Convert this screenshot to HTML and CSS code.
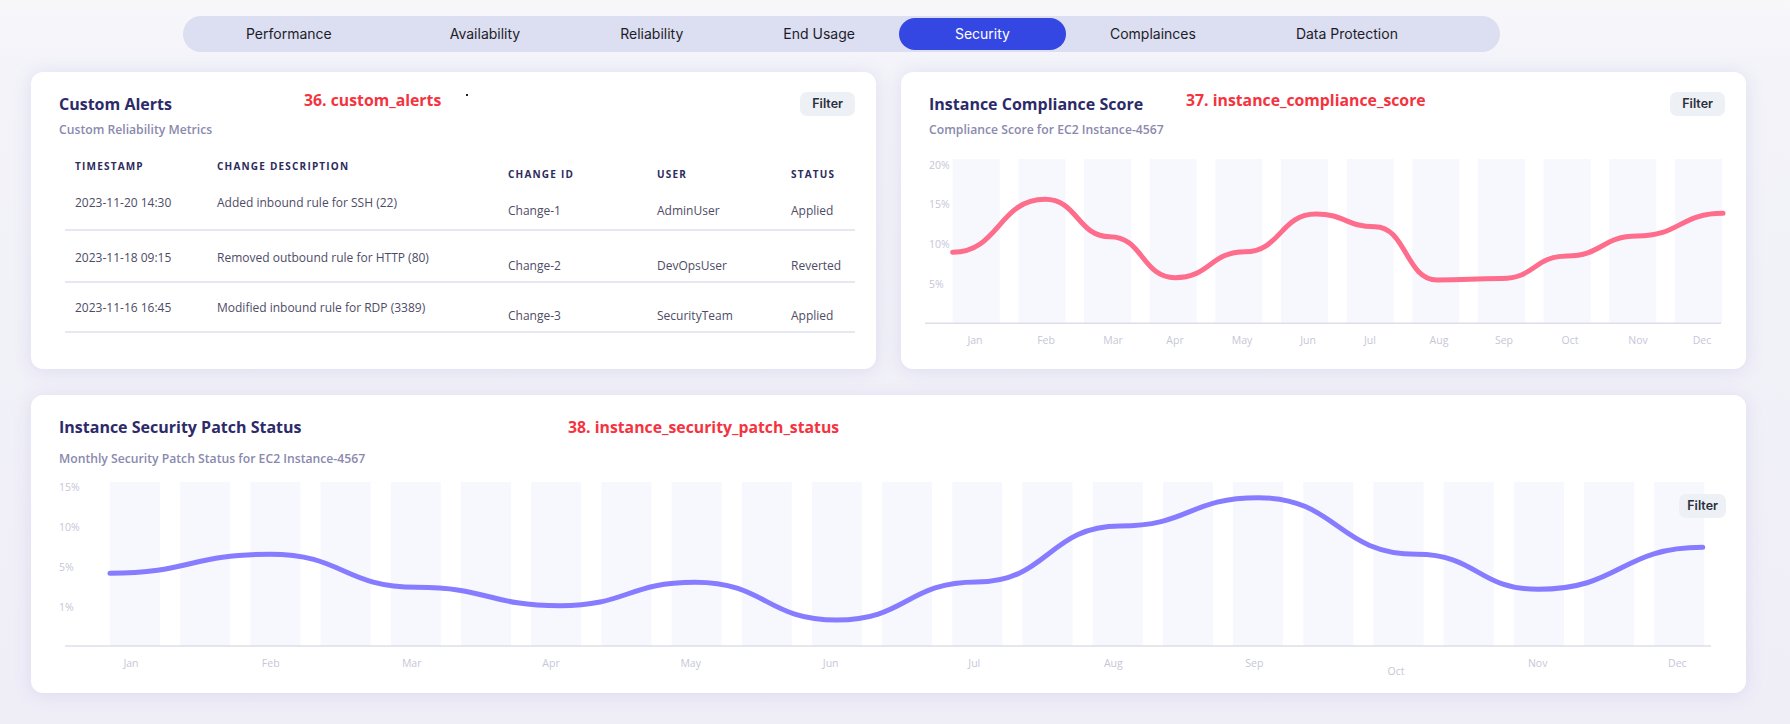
FILE: index.html
```html
<!DOCTYPE html>
<html lang="en">
<head>
<meta charset="utf-8">
<title>Security</title>
<link rel="stylesheet" href="styles.css">
</head>
<body>
<div class="page">
  <nav class="tabs">
    <span class="tab">Performance</span>
    <span class="tab">Availability</span>
    <span class="tab">Reliability</span>
    <span class="tab">End Usage</span>
    <span class="tab active">Security</span>
    <span class="tab">Complainces</span>
    <span class="tab">Data Protection</span>
  </nav>

  <div class="grid">
    <section class="card">
      <div class="card-head">
        <h2 class="card-title">Custom Alerts</h2>
        <button class="filter">Filter</button>
      </div>
      <p class="card-sub">Custom Reliability Metrics</p>
      <span class="tag tag-36">36. custom_alerts</span>
      <span class="dot"></span>
      <div class="table">
        <div class="tr th">
          <div class="c">TIMESTAMP</div>
          <div class="c">CHANGE DESCRIPTION</div>
          <div class="c low">CHANGE ID</div>
          <div class="c low">USER</div>
          <div class="c low">STATUS</div>
        </div>
        <div class="tr td">
          <div class="c">2023-11-20 14:30</div>
          <div class="c">Added inbound rule for SSH (22)</div>
          <div class="c low">Change-1</div>
          <div class="c low">AdminUser</div>
          <div class="c low">Applied</div>
        </div>
        <div class="tr td">
          <div class="c">2023-11-18 09:15</div>
          <div class="c">Removed outbound rule for HTTP (80)</div>
          <div class="c low">Change-2</div>
          <div class="c low">DevOpsUser</div>
          <div class="c low">Reverted</div>
        </div>
        <div class="tr td">
          <div class="c">2023-11-16 16:45</div>
          <div class="c">Modified inbound rule for RDP (3389)</div>
          <div class="c low">Change-3</div>
          <div class="c low">SecurityTeam</div>
          <div class="c low">Applied</div>
        </div>
      </div>
    </section>

    <section class="card">
      <div class="card-head">
        <h2 class="card-title">Instance Compliance Score</h2>
        <button class="filter">Filter</button>
      </div>
      <p class="card-sub">Compliance Score for EC2 Instance-4567</p>
      <span class="tag tag-37">37. instance_compliance_score</span>
      <svg class="chart" width="845" height="210" viewBox="0 0 845 210">
        <g class="bars">
          <rect x="51.7" y="9" width="47" height="164"/>
          <rect x="117.4" y="9" width="47" height="164"/>
          <rect x="183.0" y="9" width="47" height="164"/>
          <rect x="248.7" y="9" width="47" height="164"/>
          <rect x="314.3" y="9" width="47" height="164"/>
          <rect x="380.0" y="9" width="47" height="164"/>
          <rect x="445.7" y="9" width="47" height="164"/>
          <rect x="511.3" y="9" width="47" height="164"/>
          <rect x="577.0" y="9" width="47" height="164"/>
          <rect x="642.6" y="9" width="47" height="164"/>
          <rect x="708.3" y="9" width="47" height="164"/>
          <rect x="773.9" y="9" width="47" height="164"/>
        </g>
        <line class="axis" x1="24" y1="173.3" x2="820" y2="173.3"/>
        <g class="ylab">
          <text x="28" y="15">20%</text>
          <text x="28" y="54.3">15%</text>
          <text x="28" y="94.3">10%</text>
          <text x="28" y="134.3">5%</text>
        </g>
        <g class="xlab">
          <text x="74" y="190">Jan</text>
          <text x="145" y="190">Feb</text>
          <text x="212" y="190">Mar</text>
          <text x="274" y="190">Apr</text>
          <text x="341" y="190">May</text>
          <text x="407" y="190">Jun</text>
          <text x="469" y="190">Jul</text>
          <text x="538" y="190">Aug</text>
          <text x="603" y="190">Sep</text>
          <text x="669" y="190">Oct</text>
          <text x="737" y="190">Nov</text>
          <text x="801" y="190">Dec</text>
        </g>
        <path class="line pink" d="M51.7,102.3 C97.85,102.3 97.85,49.3 144,49.3 C176.5,49.3 176.5,86.7 209,86.7 C241.5,86.7 241.5,127.7 274,127.7 C309,127.7 309,101.7 344,101.7 C379.5,101.7 379.5,64 415,64 C444.5,64 444.5,76.7 474,76.7 C505,76.7 505,130 536,130 C568.5,130 568.5,128.5 601,128.5 C633.5,128.5 633.5,106 666,106 C701,106 701,86 736,86 C779,86 779,63.3 822,63.3"/>
      </svg>
    </section>

    <section class="card card-wide">
      <div class="card-head">
        <h2 class="card-title">Instance Security Patch Status</h2>
      </div>
      <p class="card-sub">Monthly Security Patch Status for EC2 Instance-4567</p>
      <span class="tag tag-38">38. instance_security_patch_status</span>
      <button class="filter filter-float">Filter</button>
      <svg class="chart chart-wide" width="1715" height="210" viewBox="0 0 1715 210">
        <g class="bars">
          <rect x="79" y="9" width="50" height="164"/>
          <rect x="149.2" y="9" width="50" height="164"/>
          <rect x="219.4" y="9" width="50" height="164"/>
          <rect x="289.6" y="9" width="50" height="164"/>
          <rect x="359.8" y="9" width="50" height="164"/>
          <rect x="430" y="9" width="50" height="164"/>
          <rect x="500.2" y="9" width="50" height="164"/>
          <rect x="570.4" y="9" width="50" height="164"/>
          <rect x="640.6" y="9" width="50" height="164"/>
          <rect x="710.8" y="9" width="50" height="164"/>
          <rect x="781" y="9" width="50" height="164"/>
          <rect x="851.1" y="9" width="50" height="164"/>
          <rect x="921.3" y="9" width="50" height="164"/>
          <rect x="991.5" y="9" width="50" height="164"/>
          <rect x="1061.7" y="9" width="50" height="164"/>
          <rect x="1131.9" y="9" width="50" height="164"/>
          <rect x="1202.1" y="9" width="50" height="164"/>
          <rect x="1272.3" y="9" width="50" height="164"/>
          <rect x="1342.5" y="9" width="50" height="164"/>
          <rect x="1412.7" y="9" width="50" height="164"/>
          <rect x="1482.9" y="9" width="50" height="164"/>
          <rect x="1553.1" y="9" width="50" height="164"/>
          <rect x="1623.3" y="9" width="50" height="164"/>
        </g>
        <line class="axis" x1="34" y1="173" x2="1680" y2="173"/>
        <g class="ylab">
          <text x="28" y="14">15%</text>
          <text x="28" y="54">10%</text>
          <text x="28" y="94">5%</text>
          <text x="28" y="134">1%</text>
        </g>
        <g class="xlab">
          <text x="100" y="190">Jan</text>
          <text x="239.7" y="190">Feb</text>
          <text x="380.7" y="190">Mar</text>
          <text x="520" y="190">Apr</text>
          <text x="659.7" y="190">May</text>
          <text x="799.7" y="190">Jun</text>
          <text x="943.3" y="190">Jul</text>
          <text x="1082.3" y="190">Aug</text>
          <text x="1223.3" y="190">Sep</text>
          <text x="1365" y="198">Oct</text>
          <text x="1506.7" y="190">Nov</text>
          <text x="1646.3" y="190">Dec</text>
        </g>
        <path class="line purple" d="M79,100.3 C159,100.3 159,81.3 239,81.3 C312.35,81.3 312.35,114.3 385.7,114.3 C457.35,114.3 457.35,132.7 529,132.7 C596.5,132.7 596.5,109.3 664,109.3 C734.85,109.3 734.85,147 805.7,147 C875.7,147 875.7,109 945.7,109 C1017.35,109 1017.35,53 1089,53 C1158.15,53 1158.15,24.7 1227.3,24.7 C1306.5,24.7 1306.5,81.3 1385.7,81.3 C1446.5,81.3 1446.5,116.3 1507.3,116.3 C1589.5,116.3 1589.5,74.3 1671.7,74.3"/>
      </svg>
    </section>
  </div>
</div>
</body>
</html>
```

FILE: styles.css
```css
* { box-sizing: border-box; }

body {
  margin: 0;
  width: 1790px;
  height: 724px;
  overflow: hidden;
  font-family: "Open Sans", sans-serif;
  background: linear-gradient(180deg, #f8f8fb 0px, #f3f3f9 60px, #efeef7 100%);
}

.page {
  padding: 16px 0 0 31px;
}

/* ---------- tabs ---------- */
.tabs {
  margin-left: 152px;
  width: 1317px;
  height: 36px;
  border-radius: 18px;
  background: #dcdef1;
  display: flex;
  align-items: center;
  padding: 0 2px 0 13px;
}

.tab {
  padding: 0 50px;
  height: 32px;
  font: 400 14px/32px Inter, "Open Sans", sans-serif;
  color: #1d1d29;
  white-space: nowrap;
}

.tab:first-child { margin-right: 18px; }

.tab.active {
  background: #3447e3;
  color: #fff;
  border-radius: 16px;
  padding: 0 56px;
  margin: 0 -6px;
}

/* ---------- cards ---------- */
.grid {
  display: grid;
  grid-template-columns: 845px 845px;
  grid-template-rows: 297px 298px;
  column-gap: 25px;
  row-gap: 26px;
  margin-top: 20px;
}

.card {
  position: relative;
  background: #fff;
  border-radius: 12px;
  box-shadow: 0 2px 18px rgba(125, 115, 200, 0.16);
}

.card-wide { grid-column: 1 / 3; }

.card-head {
  display: flex;
  justify-content: space-between;
  align-items: center;
  min-height: 44px;
  padding: 20px 21px 0 28px;
}

.card-title {
  margin: 0;
  font: 700 16px/22px "Open Sans", sans-serif;
  color: #2c2a68;
}

.card-sub {
  margin: 5px 0 0 28px;
  font: 600 12.2px/18px "Open Sans", sans-serif;
  color: #8a89ae;
}

.card-wide .card-sub { margin-top: 11px; }

.filter {
  border: 0;
  background: #edf0f4;
  border-radius: 7px;
  height: 24px;
  padding: 0 12px;
  font: 600 12.5px/24px Inter, sans-serif;
  color: #2a2f3b;
}

.filter-float {
  position: absolute;
  right: 20px;
  top: 99px;
  padding: 0 8px;
}

/* annotation labels laid over the cards */
.tag {
  position: absolute;
  top: 18px;
  font: 700 15.8px/20px "Open Sans", sans-serif;
  color: #f5333f;
  white-space: nowrap;
}
.tag-36 { left: 273px; }
.tag-37 { left: 285px; }
.tag-38 { left: 537px; top: 22px; }

.dot {
  position: absolute;
  left: 435px;
  top: 22px;
  width: 2px;
  height: 2px;
  background: #222;
}

/* ---------- table ---------- */
.table {
  margin: 17px 21px 0 34px;
}

.tr {
  display: grid;
  grid-template-columns: 142px 291px 149px 134px 74px;
  align-items: start;
}

.c {
  padding-left: 10px;
  line-height: 20px;
  white-space: nowrap;
}

.c.low { padding-top: 8px; }

.th {
  height: 30px;
  font: 700 10px/20px "Open Sans", sans-serif;
  letter-spacing: 1.2px;
  color: #2d2b5c;
}

.td {
  font: 400 12px/20px "Open Sans", sans-serif;
  color: #4d4c66;
  border-bottom: 2px solid #e5e7f1;
  padding-bottom: 5px;
}

.td:nth-child(2) { padding-top: 7px; padding-bottom: 8px; }
.td:nth-child(3) { padding-top: 17px; }
.td:nth-child(4) { padding-top: 15px; }

/* ---------- charts ---------- */
.chart {
  display: block;
  margin-top: 11px;
  overflow: visible;
}

.chart-wide { margin-top: 5px; }

.bars rect { fill: #f7f8fd; }

.axis {
  stroke: #dedeea;
  stroke-width: 1.5;
}

.ylab text, .xlab text {
  font: 400 10.5px "Open Sans", sans-serif;
  fill: #c6c6d8;
  dominant-baseline: central;
}

.xlab text { text-anchor: middle; }

.line {
  fill: none;
  stroke-width: 5;
  stroke-linecap: round;
  stroke-linejoin: round;
}

.pink { stroke: #fe6d8b; }
.purple { stroke: #877bff; }
```
